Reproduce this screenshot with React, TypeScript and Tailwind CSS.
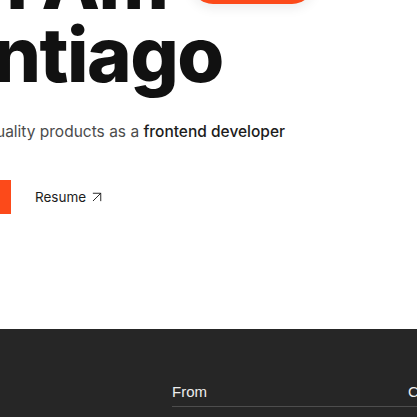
import { ArrowUpRight } from 'lucide-react'

const Hero = () => {
  return (
    <section className="flex h-[329px] flex-col -ml-[95px] bg-white font-['Inter',sans-serif]">
      <h1 className="-mt-[55px] text-[76px] leading-[73px] font-extrabold tracking-[-0.02em] text-[#111111]">
        <span className="-ml-[15px] flex flex-row items-center gap-6">
          <span>Hi! I Am</span>
          <span className="h-11 w-[123px] rounded-full bg-[#fc4a1a] shadow-[0_4px_12px_rgba(0,0,0,0.08)]" />
        </span>
        <span className="block -ml-[4px]">Santiago</span>
      </h1>
      <p className="-ml-[3px] mt-[29px] text-[15.5px] leading-6 text-[#4b4b4b]">
        I build high quality products as a{' '}
        <span className="font-medium text-[#1c1c1c]">frontend developer</span>
      </p>
      <div className="mt-[36px] flex flex-row items-center gap-6">
        <button className="h-[34px] w-[106px] bg-[#fc4a1a] text-sm font-medium text-white">
          Contact
        </button>
        <a className="flex flex-row items-center gap-0.5 text-[13.5px] text-[#1c1c1c]">
          Resume
          <ArrowUpRight size={18} strokeWidth={1.25} />
        </a>
      </div>
    </section>
  )
}

const Footer = () => {
  return (
    <footer className="h-[88px] bg-[#262626] pl-[172px] pt-[52px] font-['Liberation_Sans',Arial,sans-serif]">
      <div className="grid grid-cols-[236px_1fr] border-b border-[#4d4d4d] pb-[2px] text-[15px] text-[#ededed]">
        <span>From</span>
        <span>Contact</span>
      </div>
    </footer>
  )
}

export default function App() {
  return (
    <div className="w-[417px] h-[417px] overflow-hidden bg-white">
      <Hero />
      <Footer />
    </div>
  )
}
